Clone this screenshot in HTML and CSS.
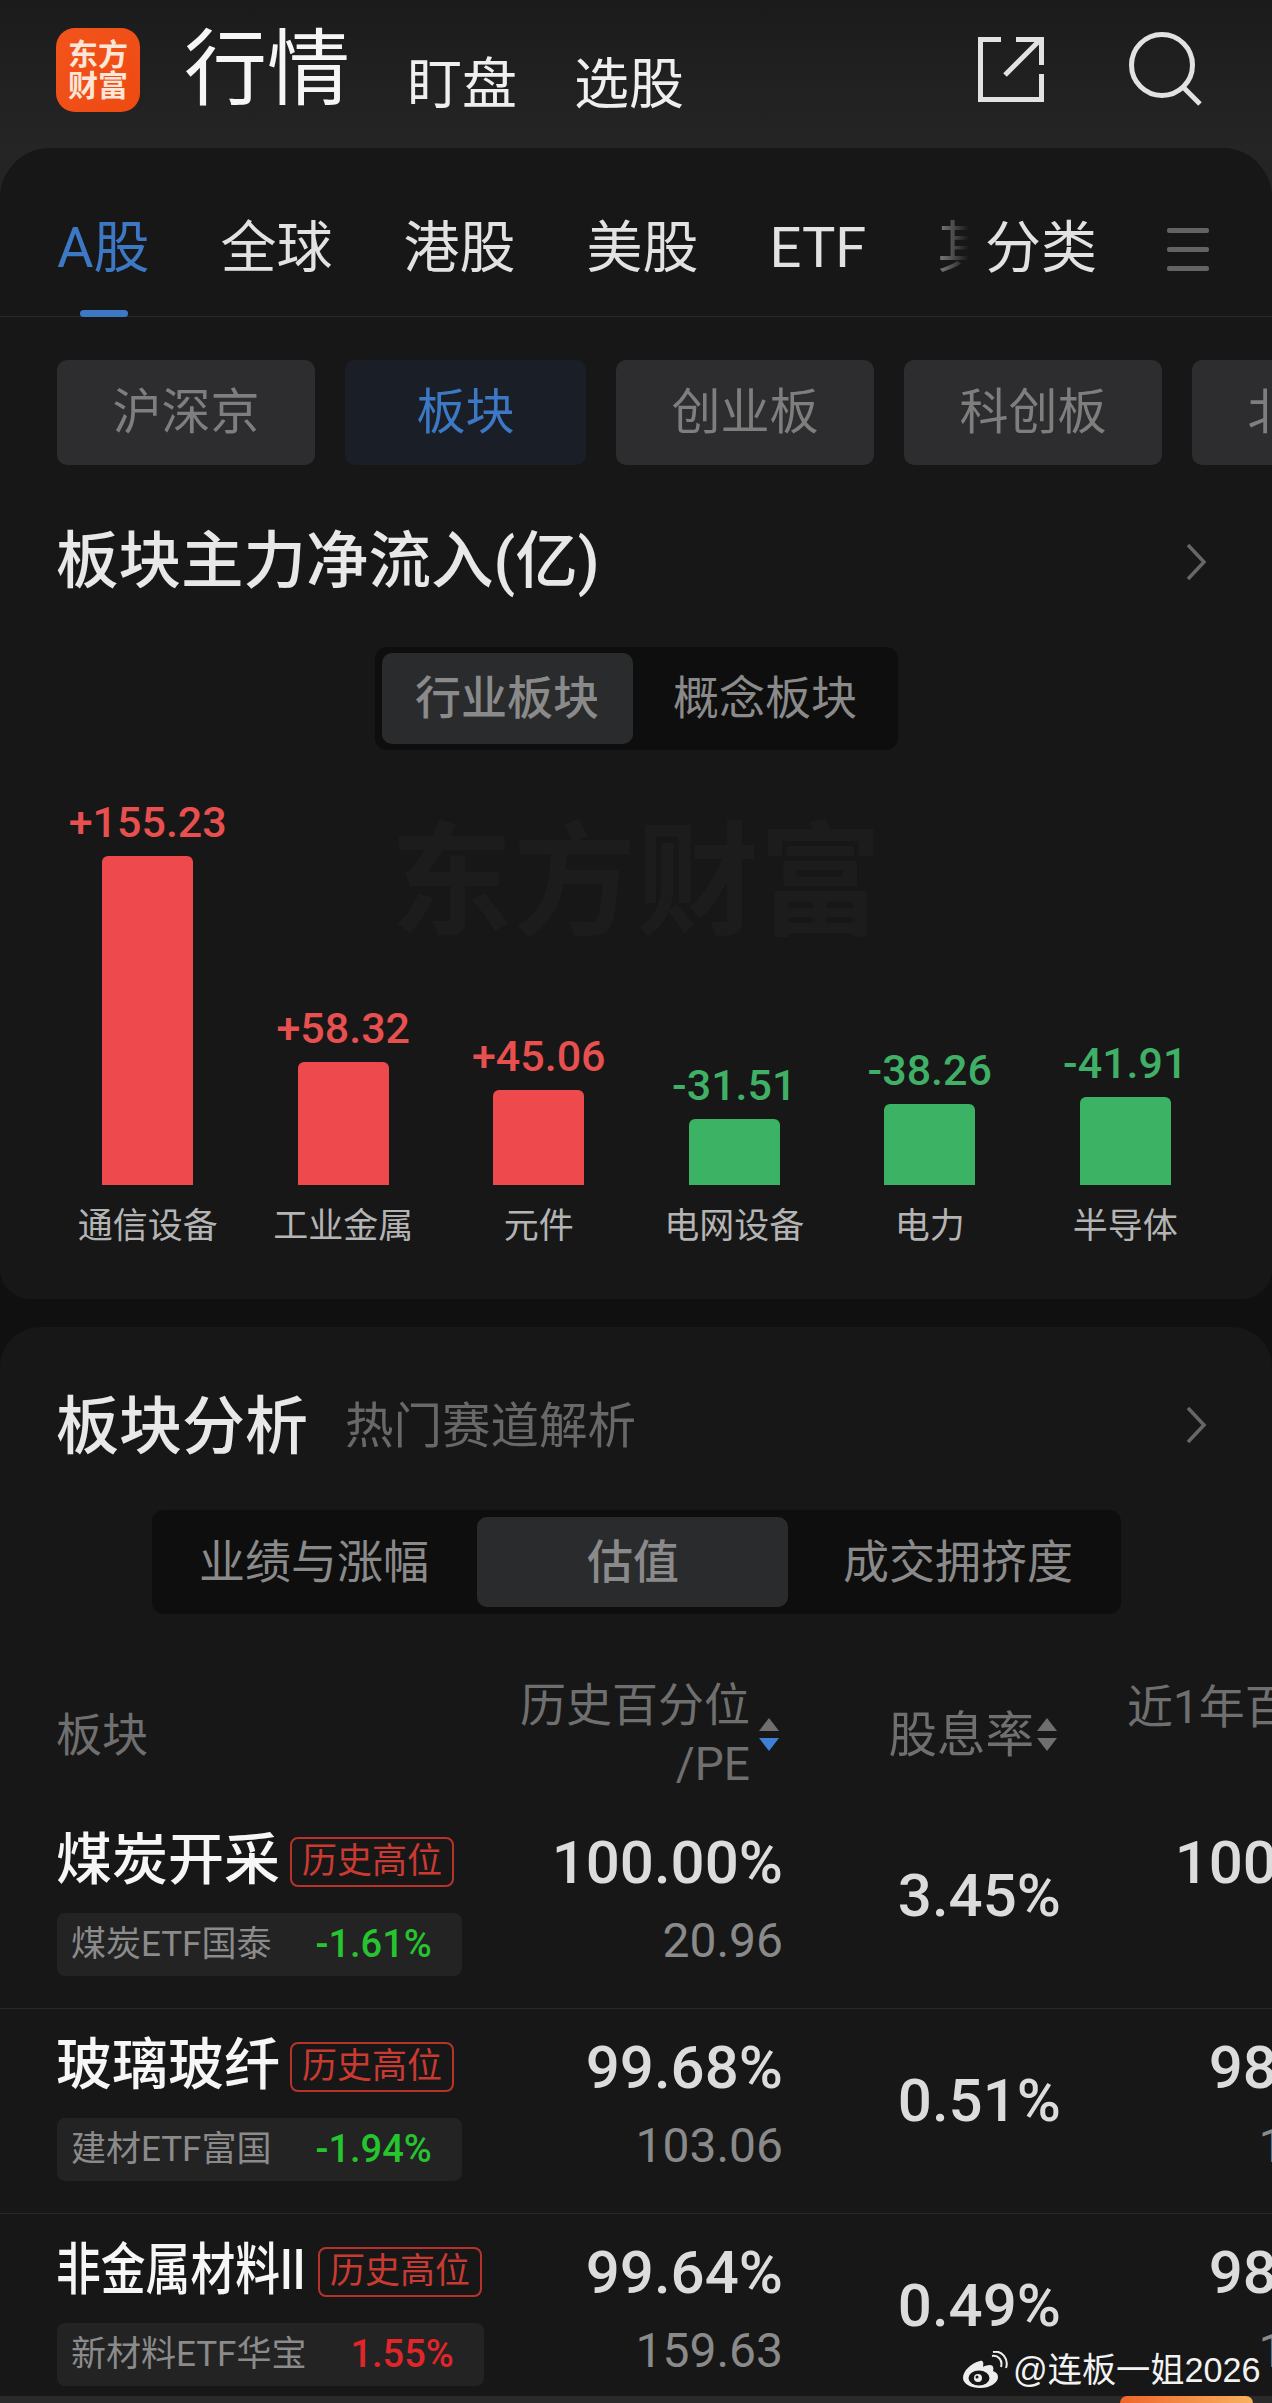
FILE: index.html
```html
<!DOCTYPE html>
<html lang="zh-CN">
<head>
<meta charset="utf-8">
<title>行情</title>
<link rel="stylesheet" href="styles.css">
</head>
<body>
<div class="page">
  <header class="header">
    <div class="logo"><span>东方</span><span>财富</span></div>
    <h1 class="title">行情</h1>
    <nav class="subnav"><span>盯盘</span><span>选股</span></nav>
    <div class="actions">
      <svg class="icon-share" width="70" height="70" viewBox="0 0 70 70"><path d="M25 4.500H4.500V64.500H65.500V39M40 4.500H65.500V30M29 40L64 5" fill="none" stroke="#e2e2e2" stroke-width="5"/></svg>
      <svg class="icon-search" width="74" height="74" viewBox="0 0 74 74"><circle cx="33" cy="33" r="30.500" fill="none" stroke="#e2e2e2" stroke-width="5"/><path d="M54 55L71 72" fill="none" stroke="#e2e2e2" stroke-width="5"/></svg>
    </div>
  </header>

  <section class="card card-top">
    <div class="tabs">
      <span class="tab tab-active">A股</span>
      <span class="tab">全球</span>
      <span class="tab">港股</span>
      <span class="tab">美股</span>
      <span class="tab">ETF</span>
      <span class="tab tab-dim">其他</span>
      <div class="tab-end">
        <span class="tab">分类</span>
        <span class="menu"><i></i><i></i><i></i></span>
      </div>
    </div>
    <div class="chips">
      <span class="chip">沪深京</span>
      <span class="chip chip-active">板块</span>
      <span class="chip">创业板</span>
      <span class="chip">科创板</span>
      <span class="chip">北交所</span>
    </div>
    <div class="section-head head-flow">
      <h2 class="section-title title-flow">板块主力净流入(亿)</h2>
      <svg class="chevron" width="22" height="38" viewBox="0 0 22 38"><path d="M3 2L19 19L3 36" fill="none" stroke="#676767" stroke-width="3.500"/></svg>
    </div>
    <div class="seg seg-small">
      <span class="seg-item seg-on">行业板块</span>
      <span class="seg-item seg-wide">概念板块</span>
    </div>
    <div class="chart">
      <div class="watermark">东方财富</div>
      <div class="col"><span class="val up">+155.23</span><span class="bar bar-up" style="height:329px"></span><span class="lab">通信设备</span></div>
      <div class="col"><span class="val up">+58.32</span><span class="bar bar-up" style="height:123px"></span><span class="lab">工业金属</span></div>
      <div class="col"><span class="val up">+45.06</span><span class="bar bar-up" style="height:95px"></span><span class="lab">元件</span></div>
      <div class="col"><span class="val down">-31.51</span><span class="bar bar-down" style="height:66px"></span><span class="lab">电网设备</span></div>
      <div class="col"><span class="val down">-38.26</span><span class="bar bar-down" style="height:81px"></span><span class="lab">电力</span></div>
      <div class="col"><span class="val down">-41.91</span><span class="bar bar-down" style="height:88px"></span><span class="lab">半导体</span></div>
    </div>
  </section>

  <section class="card card-bottom">
    <div class="section-head">
      <div class="title-group">
        <h2 class="section-title">板块分析</h2>
        <span class="section-sub">热门赛道解析</span>
      </div>
      <svg class="chevron chevron-up" width="22" height="38" viewBox="0 0 22 38"><path d="M3 2L19 19L3 36" fill="none" stroke="#676767" stroke-width="3.500"/></svg>
    </div>
    <div class="seg seg-large">
      <span class="seg-item s1">业绩与涨幅</span>
      <span class="seg-item s2 seg-on">估值</span>
      <span class="seg-item s3">成交拥挤度</span>
    </div>

    <div class="table-head">
      <div class="th c-name">板块</div>
      <div class="th c-pe">
        <span class="th-text">历史百分位<br>/PE</span>
        <svg class="sort" width="22" height="34" viewBox="0 0 22 34"><path d="M11 0L21 13H1Z" fill="#6f6f6f"/><path d="M1 20H21L11 33Z" fill="#3f80d6"/></svg>
      </div>
      <div class="th c-yield">
        <span class="th-yield">股息率</span>
        <svg class="sort" width="22" height="34" viewBox="0 0 22 34"><path d="M11 0L21 13H1Z" fill="#6f6f6f"/><path d="M1 20H21L11 33Z" fill="#6f6f6f"/></svg>
      </div>
      <div class="th c-year"><span class="th-year">近1年百分位</span></div>
    </div>

    <div class="row">
      <div class="c-name">
        <div class="name-line"><span class="name">煤炭开采</span><span class="badge">历史高位</span></div>
        <div class="pill"><span class="etf">煤炭ETF国泰</span><span class="chg chg-down">-1.61%</span></div>
      </div>
      <div class="c-pe nums"><span class="big">100.00%</span><span class="small">20.96</span></div>
      <div class="c-yield mid">3.45%</div>
      <div class="c-year nums"><span class="big">100.00%</span><span class="small">20.96</span></div>
    </div>
    <div class="row">
      <div class="c-name">
        <div class="name-line"><span class="name">玻璃玻纤</span><span class="badge">历史高位</span></div>
        <div class="pill"><span class="etf">建材ETF富国</span><span class="chg chg-down">-1.94%</span></div>
      </div>
      <div class="c-pe nums"><span class="big">99.68%</span><span class="small">103.06</span></div>
      <div class="c-yield mid">0.51%</div>
      <div class="c-year nums"><span class="big">98.68%</span><span class="small">103.06</span></div>
    </div>
    <div class="row">
      <div class="c-name">
        <div class="name-line"><span class="name name-narrow">非金属材料II</span><span class="badge">历史高位</span></div>
        <div class="pill"><span class="etf">新材料ETF华宝</span><span class="chg chg-up">1.55%</span></div>
      </div>
      <div class="c-pe nums"><span class="big">99.64%</span><span class="small">159.63</span></div>
      <div class="c-yield mid">0.49%</div>
      <div class="c-year nums"><span class="big">98.64%</span><span class="small">159.63</span></div>
    </div>
  </section>

  <div class="weibo">
    <svg width="46" height="38" viewBox="0 0 46 38"><path d="M18 10C9 12 1 20 1 27C1 33 9 37 18 37C28 37 36 32 36 26C36 22 33 21 31 20C32 17 31 14 28 14C25 14 22 15 21 16C22 12 21 9 18 10Z" fill="#eeeeee"/><ellipse cx="17" cy="27" rx="10.500" ry="7.500" fill="#161616"/><circle cx="16" cy="27" r="4" fill="#eeeeee"/><circle cx="15" cy="26" r="1.500" fill="#161616"/><path d="M30 5C36 4 41 9 39 16M31 1C40 -1 47 8 44 17" fill="none" stroke="#eeeeee" stroke-width="2"/></svg>
    <span>@连板一姐2026</span>
  </div>
  <div class="bottom-bar"><span class="bottom-tab"></span></div>
</div>
</body>
</html>
```

FILE: styles.css
```css
* { box-sizing: border-box; }
html, body { margin: 0; padding: 0; background: #101010; }
.page {
  position: relative;
  width: 1272px;
  height: 2403px;
  overflow: hidden;
  font-family: Roboto, "Noto Sans CJK SC", sans-serif;
  background: linear-gradient(#1b1b1c 0, #252525 148px, #222222 210px, #101010 300px);
  color: #e0e0e0;
}
h1, h2 { margin: 0; font-weight: 500; }

/* header */
.header { display: flex; height: 148px; padding: 28px 0 0 56px; }
.logo {
  display: flex; flex-direction: column; align-items: center; justify-content: center;
  width: 84px; height: 84px; border-radius: 19px;
  background: linear-gradient(135deg, #f2541c, #ee4a12);
  color: #fbe6d8; font-size: 30px; line-height: 31px; font-weight: 700;
}
.title { margin-left: 44px; font-size: 83px; line-height: 84px; font-weight: 400; color: #f6f6f6; }
.subnav { display: flex; gap: 57px; margin: 29px 0 0 57px; font-size: 55px; line-height: 55px; color: #efefef; }
.actions { display: flex; align-items: flex-start; gap: 88px; margin-left: auto; padding: 7px 69px 0 0; }
.icon-search { margin-top: -3px; margin-left: -5px; }

/* cards */
.card { background: #171717; overflow: hidden; }
.card-top { height: 1151px; border-radius: 50px 50px 30px 30px; }
.card-bottom { height: 1100px; margin-top: 28px; padding-top: 65px; border-radius: 40px 40px 0 0; }

/* tabs */
.tabs {
  position: relative; display: flex; gap: 71px; height: 169px;
  padding: 73px 0 0 57px;
  border-bottom: 1px solid #2a2a2a; white-space: nowrap;
}
.tab { position: relative; height: 96px; font-size: 56px; line-height: 54px; color: #e2e2e2; }
.tab-active { color: #3d78c4; }
.tab-active::after {
  content: ""; position: absolute; left: 23px; bottom: 0; width: 48px; height: 7px;
  border-radius: 4px; background: #3d78c4;
}
.tab-dim { color: #7a7a7a; }
.tab-end {
  position: absolute; top: 0; bottom: 0; right: 0; display: flex; gap: 70px;
  padding: 73px 63px 0 46px;
  background: linear-gradient(90deg, rgba(23,23,23,0), #171717 30px);
}
.menu { display: flex; flex-direction: column; gap: 14px; width: 42px; padding-top: 7px; }
.menu i { display: block; height: 5px; border-radius: 2px; background: #636363; }

/* chips */
.chips { display: flex; gap: 30px; margin-top: 43px; padding-left: 57px; white-space: nowrap; }
.chip {
  flex: 0 0 258px; height: 105px; border-radius: 10px; background: #2d2d2f;
  font-size: 49px; line-height: 105px; text-align: center; color: #7e7e7e;
}
.chip-active { flex-basis: 241px; background: #1a1f27; color: #3d78c4; }

/* section heads */
.section-head { display: flex; justify-content: space-between; align-items: center; height: 70px; padding: 0 65px 0 56px; }
.head-flow { margin-top: 62px; }
.section-title { font-size: 63px; line-height: 70px; color: #e8e8e8; }
.title-flow { font-size: 62.500px; }
.title-group { display: flex; align-items: center; gap: 37px; }
.section-sub { font-size: 48.500px; line-height: 70px; color: #686868; }
.chevron-up { margin-top: -4px; }

/* segmented */
.seg { display: flex; margin: 0 auto; background: #0e0e0e; border-radius: 12px; }
.seg-item { display: block; text-align: center; color: #8a8a8a; }
.seg-on { background: #2a2b2d; border-radius: 10px; font-weight: 500; }
.seg-small { width: 523px; height: 103px; margin-top: 50px; padding: 6px 0 6px 7px; font-size: 46px; line-height: 91px; }
.seg-small .seg-item { width: 251px; }
.seg-small .seg-wide { width: 265px; }
.seg-large { width: 969px; height: 104px; margin-top: 48px; padding: 7px 0; font-size: 46px; line-height: 91px; }
.s1 { width: 325px; }
.s2 { width: 311px; padding-left: 2px; }
.s3 { width: 333px; padding-left: 8px; }

/* chart */
.chart { position: relative; display: flex; align-items: flex-end; width: 1272px; height: 497px; padding-left: 50px; }
.watermark {
  position: absolute; left: 390px; top: 72px;
  font-size: 123px; line-height: 123px; font-weight: 700; color: #1c1c1c; white-space: nowrap;
}
.col { position: relative; display: flex; flex-direction: column; align-items: center; width: 195.5px; }
.val { font-size: 43px; line-height: 50px; margin-bottom: 9px; font-weight: 500; }
.up { color: #e8504f; }
.down { color: #3fb066; }
.bar { width: 91px; border-radius: 6px 6px 0 0; }
.bar-up { background: #ee4a4e; }
.bar-down { background: #3cb265; }
.lab { margin-top: 21px; font-size: 35px; line-height: 41px; color: #b4b4b4; }

/* table */
.table-head { display: flex; height: 126px; margin-top: 64px; padding-left: 57px; white-space: nowrap; }
.th { display: flex; justify-content: flex-end; align-items: center; font-size: 46px; line-height: 59px; color: #6f6f6f; }
.table-head .c-name { justify-content: flex-start; height: 114px; margin-left: -1px; }
.table-head .c-pe, .table-head .c-yield { height: 114px; }
.table-head .c-pe { margin-left: 1px; }
.th-text { text-align: right; margin-right: 8px; }
.th-yield { font-size: 48.500px; margin-right: 2px; }
.table-head .c-year { height: 59px; justify-content: flex-start; padding-left: 69px; }
.th-year { display: block; }
.c-name { flex: 0 0 463px; min-width: 0; }
.c-pe { flex: 0 0 260px; }
.c-yield { flex: 0 0 278px; }
.c-year { flex: 0 0 342px; }

.row { display: flex; height: 205px; padding-left: 57px; border-bottom: 1px solid #2a2a2a; white-space: nowrap; }
.row .c-name { padding-top: 26px; }
.name-line { display: flex; align-items: center; gap: 10px; height: 60px; margin-left: -1px; }
.name { font-size: 56px; line-height: 60px; font-weight: 500; color: #f6f6f6; }
.name-narrow { display: block; flex: 0 0 252px; min-width: 0; transform: scaleX(.8); transform-origin: left center; }
.badge {
  height: 50px; margin-top: 3px; padding: 0 10px; border: 2px solid #b8322c; border-radius: 8px;
  font-size: 35px; line-height: 46px; color: #c93a32;
}
.pill {
  display: inline-flex; align-items: center; height: 63px; margin-top: 23px; padding: 0 30px 0 14px;
  border-radius: 8px; background: #232324;
}
.etf { font-size: 35px; line-height: 63px; color: #8b8b8b; }
.chg { margin-left: 44px; font-size: 38px; line-height: 63px; font-weight: 500; }
.chg-down { color: #26c42e; }
.chg-up { color: #e0262a; }
.nums { display: flex; flex-direction: column; align-items: flex-end; padding-top: 29px; }
.big { margin-right: -3px; font-size: 60px; line-height: 60px; font-weight: 500; color: #dcdcdc; }
.small { margin: 23px -3px 0 0; font-size: 48px; line-height: 50px; color: #8a8a8a; }
.mid { flex-basis: 281px; padding-top: 62px; font-size: 60px; line-height: 60px; font-weight: 500; text-align: right; color: #dcdcdc; }

/* overlays */
.weibo {
  position: absolute; left: 962px; top: 2350px; display: flex; align-items: center; gap: 5px;
  font-family: "Liberation Sans", "Noto Sans CJK SC", sans-serif; font-size: 34.200px; line-height: 40px; color: #f2f2f2;
}
.bottom-bar { position: absolute; left: 0; right: 0; bottom: 0; height: 7px; background: #2a2a2b; }
.bottom-tab {
  position: absolute; left: 1120px; top: 0; width: 133px; height: 7px; border-radius: 14px 14px 0 0;
  background: linear-gradient(90deg, #f0662a, #f7b25e);
}
```
